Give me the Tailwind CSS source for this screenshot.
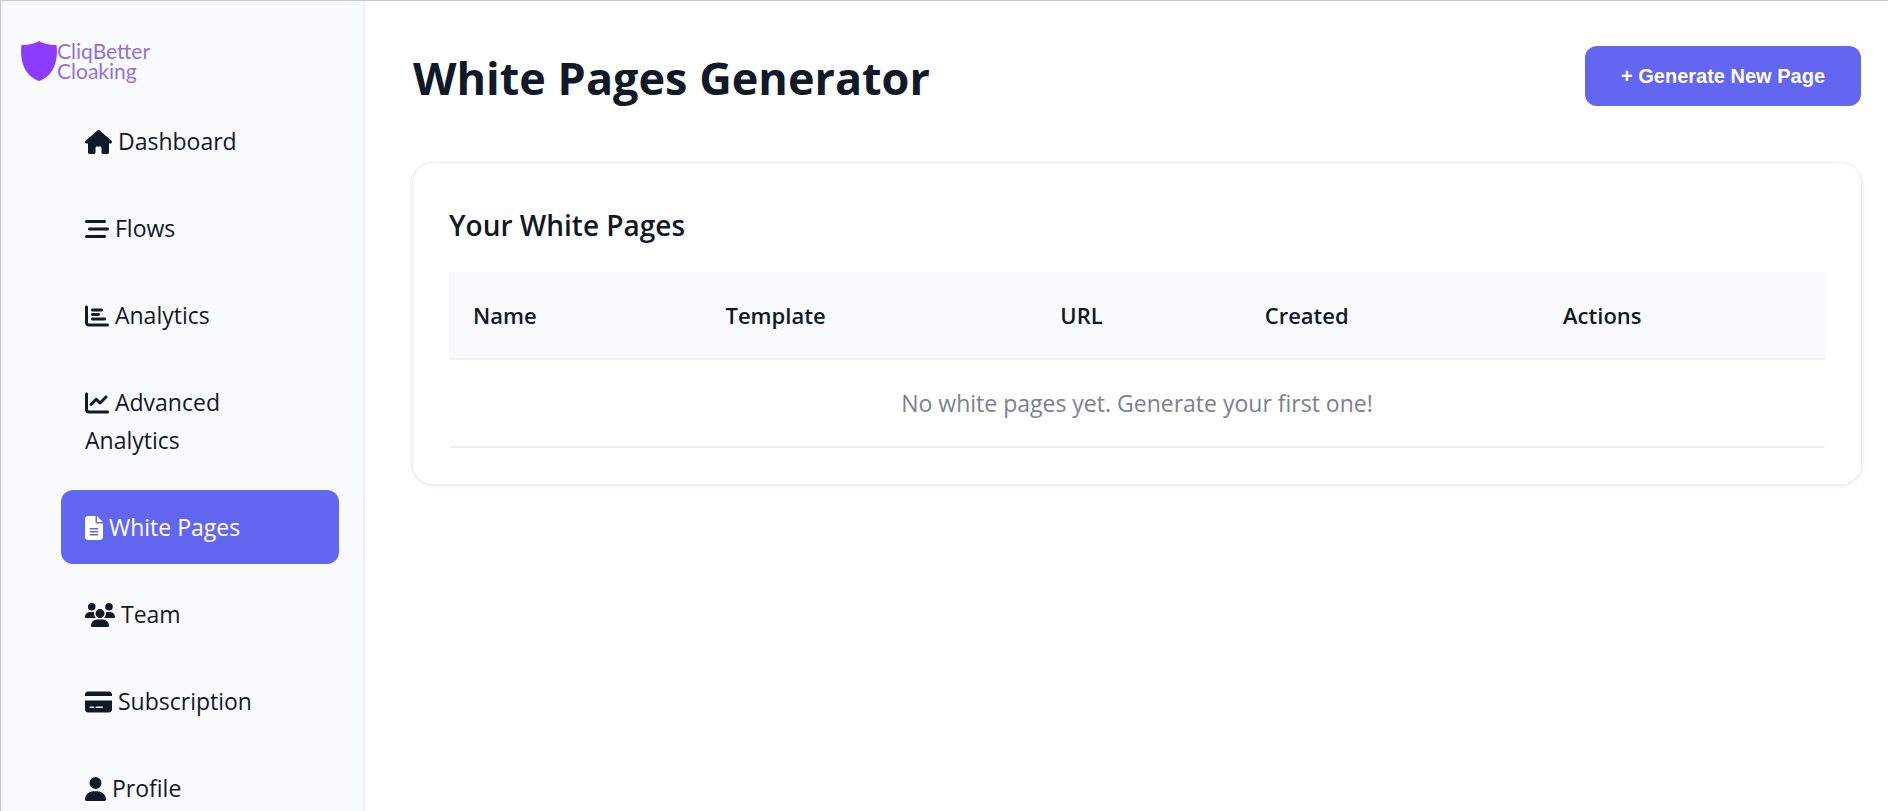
<!DOCTYPE html>
<html lang="en">
<head>
    <meta charset="UTF-8">
    <meta name="viewport" content="width=device-width, initial-scale=1.0">
    <title>White Pages Generator - CliqBetter Cloaking</title>
    <script src="https://cdn.jsdelivr.net/npm/@tailwindcss/browser@4"></script>
    <style>
        body {
            font-family: 'Open Sans', 'Noto Sans', sans-serif;
        }
    </style>
</head>
<body class="bg-white text-[#111827] text-[23px] leading-[38px]">

    <div class="flex h-screen overflow-hidden border-t border-l border-[#c9cacd]">

        <!-- Sidebar -->
        <aside class="w-[364px] shrink-0 bg-[#f9fafc] border-r-2 border-[#f0f0f5]">
            <a href="#" class="flex items-center h-20 pt-10 pl-5 text-[#9370db] font-['Lato',sans-serif] text-[21px] leading-5">
                <svg class="w-9 h-10 shrink-0" viewBox="0 0 36 40" fill="#8b3dff" aria-hidden="true">
                    <path d="M18 0C22 2.500 28 4 35.500 4C36.500 11 36 19 33 26C30 33 25 37.500 18 40C11 37.500 6 33 3 26C0 19-.5 11 .5 4C8 4 14 2.500 18 0z"/>
                </svg>
                <span>CliqBetter<br>Cloaking</span>
            </a>

            <nav class="mt-[23px]">
                <ul class="flex flex-col gap-[13px] pl-[60px] pr-6">
                    <li>
                        <a href="#" class="block px-6 py-[18px] rounded-xl">
                            <svg class="inline-block h-6 w-[27px] -mt-1" viewBox="0 0 576 512" fill="currentColor" aria-hidden="true"><path d="M575.8 255.5c0 18-15 32.1-32 32.1h-32l.7 160.2c0 2.700-.2 5.400-.5 8.100V472c0 22.100-17.900 40-40 40H392c-22.100 0-40-17.900-40-40V384c0-17.700-14.300-32-32-32H256c-17.700 0-32 14.300-32 32v88c0 22.100-17.900 40-40 40H104c-22.100 0-40-17.900-40-40V287.600H32c-18 0-32-14-32-32.100c0-9 3-17 10-24L266.400 8c7-7 15-8 22-8s15 2 21 7L564.800 231.500c8 7 12 15 11 24z"/></svg>
                            Dashboard
                        </a>
                    </li>
                    <li>
                        <a href="#" class="block px-6 py-[18px] rounded-xl">
                            <svg class="inline-block h-6 w-6 -mt-1" viewBox="0 0 512 512" fill="currentColor" aria-hidden="true"><path d="M0 96C0 78.300 14.300 64 32 64H416c17.700 0 32 14.300 32 32s-14.300 32-32 32H32C14.300 128 0 113.700 0 96zM64 256c0-17.700 14.300-32 32-32H480c17.700 0 32 14.300 32 32s-14.300 32-32 32H96c-17.700 0-32-14.300-32-32zM448 416c0 17.700-14.300 32-32 32H32c-17.700 0-32-14.300-32-32s14.300-32 32-32H416c17.700 0 32 14.300 32 32z"/></svg>
                            Flows
                        </a>
                    </li>
                    <li>
                        <a href="#" class="block px-6 py-[18px] rounded-xl">
                            <svg class="inline-block h-6 w-6 -mt-1" viewBox="0 0 512 512" fill="currentColor" aria-hidden="true"><path d="M32 32c17.700 0 32 14.300 32 32V400c0 8.800 7.200 16 16 16H480c17.700 0 32 14.300 32 32s-14.300 32-32 32H80c-44.200 0-80-35.800-80-80V64C0 46.300 14.300 32 32 32zm96 96c0-17.700 14.300-32 32-32H352c17.700 0 32 14.300 32 32s-14.300 32-32 32H160c-17.700 0-32-14.300-32-32zm32 64H288c17.700 0 32 14.300 32 32s-14.300 32-32 32H160c-17.700 0-32-14.300-32-32s14.300-32 32-32zm0 96H416c17.700 0 32 14.300 32 32s-14.300 32-32 32H160c-17.700 0-32-14.300-32-32s14.300-32 32-32z"/></svg>
                            Analytics
                        </a>
                    </li>
                    <li>
                        <a href="#" class="block px-6 py-[18px] rounded-xl">
                            <svg class="inline-block h-6 w-6 -mt-1" viewBox="0 0 512 512" fill="currentColor" aria-hidden="true"><path d="M64 64c0-17.700-14.300-32-32-32S0 46.300 0 64V400c0 44.200 35.800 80 80 80H480c17.700 0 32-14.300 32-32s-14.300-32-32-32H80c-8.800 0-16-7.200-16-16V64zm406.600 86.600c12.500-12.500 12.500-32.800 0-45.300s-32.800-12.500-45.300 0L320 210.700l-57.400-57.400c-12.500-12.500-32.800-12.500-45.300 0l-112 112c-12.500 12.500-12.500 32.800 0 45.300s32.800 12.500 45.300 0L240 221.300l57.400 57.400c12.500 12.500 32.800 12.500 45.300 0l128-128z"/></svg>
                            Advanced<br>Analytics
                        </a>
                    </li>
                    <li>
                        <a href="#" aria-current="page" class="block px-6 py-[18px] rounded-xl bg-[#6366f1] text-white">
                            <svg class="inline-block h-6 w-[18px] -mt-1" viewBox="0 0 384 512" fill="currentColor" aria-hidden="true"><path d="M64 0C28.700 0 0 28.700 0 64V448c0 35.300 28.700 64 64 64H320c35.300 0 64-28.700 64-64V160H256c-17.700 0-32-14.300-32-32V0H64zM256 0V128H384L256 0zM112 256H272c8.800 0 16 7.200 16 16s-7.200 16-16 16H112c-8.800 0-16-7.200-16-16s7.200-16 16-16zm0 64H272c8.800 0 16 7.200 16 16s-7.200 16-16 16H112c-8.800 0-16-7.200-16-16s7.200-16 16-16zm0 64H272c8.800 0 16 7.200 16 16s-7.200 16-16 16H112c-8.800 0-16-7.200-16-16s7.200-16 16-16z"/></svg>
                            White Pages
                        </a>
                    </li>
                    <li>
                        <a href="#" class="block px-6 py-[18px] rounded-xl">
                            <svg class="inline-block h-6 w-[30px] -mt-1" viewBox="0 0 640 512" fill="currentColor" aria-hidden="true"><path d="M144 0a80 80 0 1 1 0 160A80 80 0 1 1 144 0zM512 0a80 80 0 1 1 0 160A80 80 0 1 1 512 0zM0 298.700C0 239.800 47.800 192 106.700 192h42.700c15.900 0 31 3.500 44.600 9.700c-1.300 7.200-1.900 14.700-1.900 22.300c0 38.200 16.800 72.500 43.300 96H21.300C9.600 320 0 310.400 0 298.700zM405.300 320h-.7c26.600-23.500 43.300-57.800 43.300-96c0-7.600-.7-15-1.900-22.300c13.600-6.300 28.700-9.700 44.600-9.700h42.700C592.200 192 640 239.800 640 298.700c0 11.800-9.600 21.300-21.300 21.300H405.300zM224 224a96 96 0 1 1 192 0 96 96 0 1 1 -192 0zM128 485.300C128 411.700 187.700 352 261.300 352H378.700C452.300 352 512 411.700 512 485.300c0 14.700-11.900 26.700-26.700 26.700H154.700c-14.700 0-26.700-11.900-26.700-26.700z"/></svg>
                            Team
                        </a>
                    </li>
                    <li>
                        <a href="#" class="block px-6 py-[18px] rounded-xl">
                            <svg class="inline-block h-6 w-[27px] -mt-1" viewBox="0 0 576 512" fill="currentColor" aria-hidden="true"><path d="M64 32C28.700 32 0 60.700 0 96v32H576V96c0-35.300-28.700-64-64-64H64zM576 224H0V416c0 35.300 28.700 64 64 64H512c35.300 0 64-28.700 64-64V224zM112 352h64c8.800 0 16 7.200 16 16s-7.200 16-16 16H112c-8.800 0-16-7.200-16-16s7.200-16 16-16zm112 16c0-8.800 7.200-16 16-16H368c8.800 0 16 7.200 16 16s-7.200 16-16 16H240c-8.800 0-16-7.200-16-16z"/></svg>
                            Subscription
                        </a>
                    </li>
                    <li>
                        <a href="#" class="block px-6 py-[18px] rounded-xl">
                            <svg class="inline-block h-6 w-[21px] -mt-1" viewBox="0 0 448 512" fill="currentColor" aria-hidden="true"><path d="M224 256A128 128 0 1 0 224 0a128 128 0 1 0 0 256zm-45.700 48C79.800 304 0 383.800 0 482.300C0 498.700 13.300 512 29.700 512H418.300c16.400 0 29.700-13.300 29.700-29.700C448 383.800 368.200 304 269.700 304H178.300z"/></svg>
                            Profile
                        </a>
                    </li>
                </ul>
            </nav>
        </aside>

        <!-- Main content -->
        <main class="flex-1 min-w-0 pt-9 pl-12 pr-[27px]">
            <header class="flex items-center justify-between mb-12">
                <h1 class="pt-1 text-[45px] leading-[74px] font-bold">White Pages Generator</h1>
                <button type="button" class="h-[60px] px-9 rounded-xl bg-[#6366f1] text-white font-['Liberation_Sans',sans-serif] text-[20px] leading-6 font-bold">+ Generate New Page</button>
            </header>

            <section class="rounded-[20px] bg-white p-9 shadow-[0_0_0_1px_#ededee,0_1px_5px_rgba(0,0,0,0.12)]">
                <h2 class="pt-1 text-[28px] leading-[45px] font-semibold mb-6">Your White Pages</h2>
                <table class="w-full border-collapse text-left">
                    <thead class="bg-[#f9fafc] text-[22px]">
                        <tr class="border-b-2 border-[#f0f0f5]">
                            <th class="px-6 py-6 font-semibold">Name</th>
                            <th class="px-6 py-6 font-semibold">Template</th>
                            <th class="px-6 py-6 font-semibold">URL</th>
                            <th class="px-6 py-6 font-semibold">Created</th>
                            <th class="px-6 py-6 font-semibold">Actions</th>
                        </tr>
                    </thead>
                    <tbody>
                        <tr class="border-b-2 border-[#f0f0f1]">
                            <td colspan="5" class="px-6 py-6 text-center text-[#7b818c]">No white pages yet. Generate your first one!</td>
                        </tr>
                    </tbody>
                </table>
            </section>
        </main>
    </div>

</body>
</html>
